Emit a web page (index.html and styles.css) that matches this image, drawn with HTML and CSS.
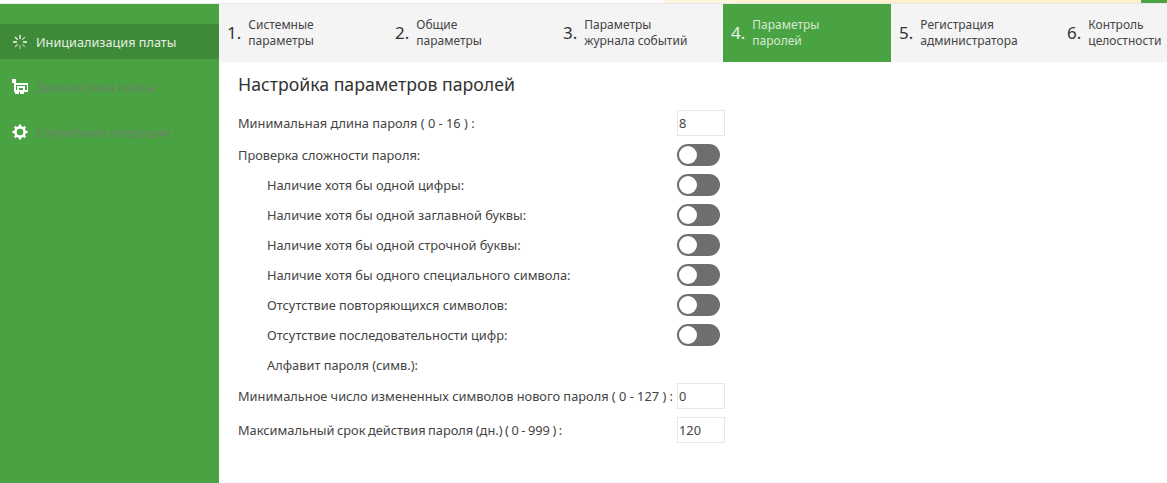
FILE: index.html
```html
<!DOCTYPE html>
<html lang="ru">
<head>
<meta charset="utf-8">
<title>Инициализация платы</title>
<link rel="stylesheet" href="styles.css">
</head>
<body>
<header class="topbar">
  <div class="notice-dots"></div>
  <div class="notice"></div>
  <div class="top-green"></div>
</header>
<div class="app">
  <nav class="sidebar">
    <a class="nav-item active">
      <svg class="nav-icon" viewBox="0 0 16 16" fill="none" stroke="#fff" stroke-width="1.300" stroke-linecap="round"><path d="M8 1.500v3M1.500 8h3M3.400 3.400l2 2M11.500 8h3"/><path opacity=".7" d="M3.400 12.600l2-2M10.600 5.400l2-2"/><path opacity=".5" d="M8 11.500v3M10.600 10.600l2 2"/></svg>
      <span>Инициализация платы</span>
    </a>
    <a class="nav-item disabled">
      <svg class="nav-icon" viewBox="0 0 16 16" fill="#fff" fill-rule="evenodd"><path d="M0 0h4v4H0zM2 4h14v9H2zM4 6v5h11V6zM5 7h8v4h-2V9H7v2H5zM3 13h4v2H3zM8 13h4v2H8z"/></svg>
      <span>Диагностика платы</span>
    </a>
    <a class="nav-item disabled">
      <svg class="nav-icon" viewBox="0 0 16 16"><circle cx="8" cy="8" r="4.600" fill="none" stroke="#fff" stroke-width="2.600"/><path fill="none" stroke="#fff" stroke-width="2.400" d="M8 .5v3M8 12.500v3M.5 8h3M12.500 8h3M2.700 2.700l2.100 2.100M11.200 11.200l2.100 2.100M2.700 13.300l2.100-2.100M11.200 4.800l2.100-2.100"/></svg>
      <span>Служебные операции</span>
    </a>
  </nav>
  <main class="content">
    <ol class="steps">
      <li class="step"><span class="num">1.</span><span class="label">Системные<br>параметры</span></li>
      <li class="step"><span class="num">2.</span><span class="label">Общие<br>параметры</span></li>
      <li class="step"><span class="num">3.</span><span class="label">Параметры<br>журнала событий</span></li>
      <li class="step current"><span class="num">4.</span><span class="label">Параметры<br>паролей</span></li>
      <li class="step"><span class="num">5.</span><span class="label">Регистрация<br>администратора</span></li>
      <li class="step"><span class="num">6.</span><span class="label">Контроль<br>целостности</span></li>
    </ol>
    <section class="form">
      <h1>Настройка параметров паролей</h1>
      <div class="row row-input row-first"><label>Минимальная длина пароля ( 0 - 16 ) :</label><input class="field" value="8"></div>
      <div class="row"><label>Проверка сложности пароля:</label><span class="toggle"></span></div>
      <div class="row sub"><label>Наличие хотя бы одной цифры:</label><span class="toggle"></span></div>
      <div class="row sub"><label>Наличие хотя бы одной заглавной буквы:</label><span class="toggle"></span></div>
      <div class="row sub"><label>Наличие хотя бы одной строчной буквы:</label><span class="toggle"></span></div>
      <div class="row sub"><label>Наличие хотя бы одного специального символа:</label><span class="toggle"></span></div>
      <div class="row sub"><label>Отсутствие повторяющихся символов:</label><span class="toggle"></span></div>
      <div class="row sub"><label>Отсутствие последовательности цифр:</label><span class="toggle"></span></div>
      <div class="row sub row-alpha"><label>Алфавит пароля (симв.):</label></div>
      <div class="row row-input row-long"><label>Минимальное число измененных символов нового пароля ( 0 - 127 ) :</label><input class="field" value="0"></div>
      <div class="row row-input row-tight"><label>Максимальный срок действия пароля (дн.) ( 0 - 999 ) :</label><input class="field" value="120"></div>
    </section>
  </main>
</div>
</body>
</html>
```
FILE: styles.css
```css
* { box-sizing: border-box; }
html, body { margin: 0; height: 100%; overflow: hidden; }
body {
  background: #fff;
  color: #444;
  font-family: "Noto Sans", "Open Sans", sans-serif;
  font-size: 12.800px;
}
.topbar {
  height: 4px;
  display: flex;
  justify-content: flex-end;
  border-bottom: 1px solid #e8e8e8;
}
.notice-dots { width: 73px; background: #fdf6dc; }
.notice { width: 404px; background: #fdf0cb; }
.top-green { width: 26px; background: #49a342; }
.app { display: flex; height: 479px; }
.sidebar {
  width: 219px;
  flex: none;
  background: #49a342;
  padding-top: 20px;
}
.nav-item {
  height: 35px;
  margin-bottom: 10px;
  display: flex;
  align-items: center;
  gap: 8px;
  padding-left: 12px;
  font-size: 12.700px;
}
.nav-item.active { background: #3e8a38; color: #e4efe2; }
.nav-item.disabled { color: #6c8268; }
.nav-icon { width: 16px; height: 16px; flex: none; }
.content { flex: 1; min-width: 0; overflow: hidden; }
.steps {
  list-style: none;
  margin: 0;
  padding: 0;
  height: 58px;
  background: #f4f4f4;
  display: flex;
}
.step {
  width: 168px;
  flex: none;
  padding-left: 8px;
  display: flex;
  align-items: center;
  gap: 7px;
  line-height: 16px;
  font-size: 12px;
}
.num { font-size: 17px; line-height: 20px; color: #333; }
.current { background: #49a342; color: #d6ead3; }
.current .num { color: #eaf4e8; }
.form { padding: 9px 0 0 19px; }
h1 {
  margin: 0 0 9px;
  font-size: 17.700px;
  font-weight: 400;
  line-height: 26px;
  color: #333;
}
.row { display: flex; align-items: center; height: 30px; }
.row label { width: 439px; flex: none; white-space: nowrap; }
.row.sub label { width: 410px; margin-left: 29px; }
.row-input { height: 33px; }
.row-first { margin-bottom: 1px; }
.row-alpha { height: 29px; }
.row-long { height: 34px; }
.row-tight label { word-spacing: -0.800px; }
.field {
  width: 48px;
  height: 26px;
  border: 1px solid #e6e6e6;
  padding: 0 1px;
  color: #444;
  font: inherit;
  word-spacing: normal;
  outline: 0;
}
.toggle {
  display: block;
  width: 43px;
  height: 22px;
  border-radius: 11px;
  background: #6e6e6e;
  position: relative;
}
.toggle::before {
  content: "";
  position: absolute;
  left: 2px;
  top: 2px;
  width: 18px;
  height: 18px;
  border-radius: 50%;
  background: #fff;
}
```
